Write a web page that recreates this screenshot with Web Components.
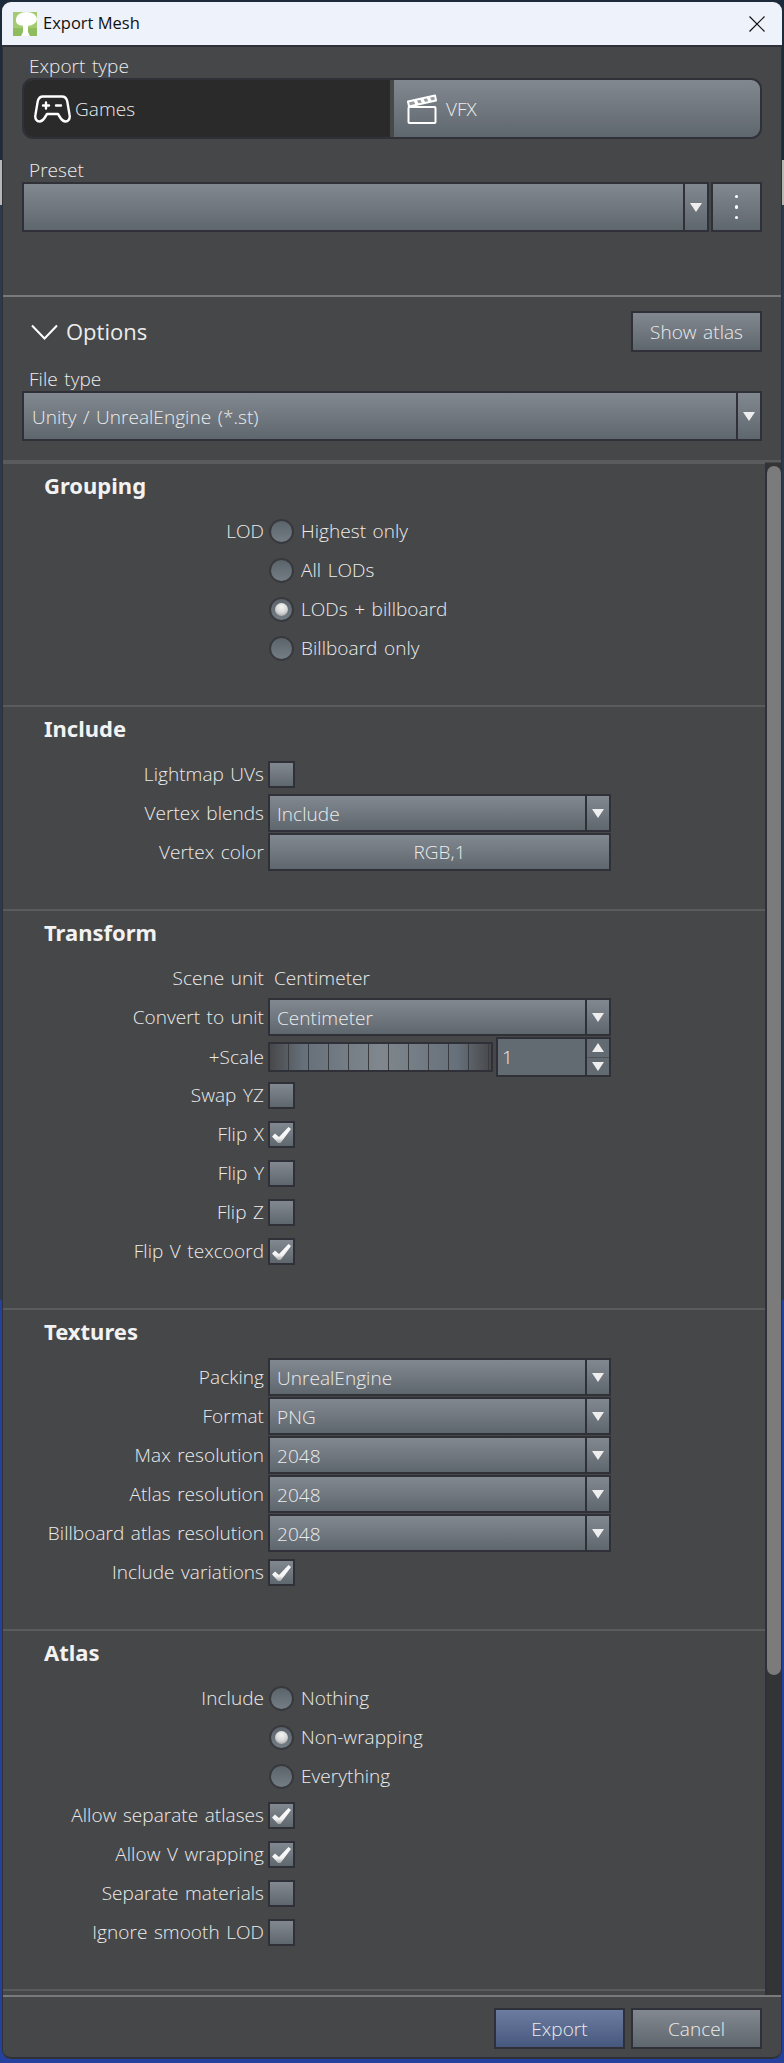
<!DOCTYPE html>
<html lang="en">
<head>
<meta charset="utf-8">
<title>Export Mesh</title>
<style>
  html, body { margin: 0; padding: 0; }
  body {
    width: 784px; height: 2063px; overflow: hidden;
    background: linear-gradient(#1d2a3a 0, #1d2a3a 160px, #b9b9b4 160px, #b9b9b4 205px, #2b3a4e 205px, #2b3a4e 1300px, #25419e 1300px);
    font-family: "Open Sans", "Liberation Sans", sans-serif;
    font-weight: 300;
    font-size: 19px;
    word-spacing: 1.5px;
    letter-spacing: .05px;
    color: #ececec;
  }
</style>
</head>
<body>

<mesh-window>
  <title-bar slot="title">Export Mesh</title-bar>

  <top-panel slot="top">
    <field-label>Export type</field-label>
    <seg-switch></seg-switch>
    <field-label style="margin-top:21px">Preset</field-label>
    <div style="display:flex;gap:2px">
      <combo-box style="flex:1" tall></combo-box>
      <ui-button tall style="width:51px"><dots-icon></dots-icon></ui-button>
    </div>
  </top-panel>

  <top-panel slot="options" options>
    <options-head></options-head>
    <field-label style="margin-top:17px">File type</field-label>
    <combo-box tall pad="10">Unity / UnrealEngine (*.st)</combo-box>
  </top-panel>

  <form-section heading="Grouping">
    <form-row label="LOD"><radio-opt>Highest only</radio-opt></form-row>
    <form-row><radio-opt>All LODs</radio-opt></form-row>
    <form-row><radio-opt checked>LODs + billboard</radio-opt></form-row>
    <form-row><radio-opt>Billboard only</radio-opt></form-row>
  </form-section>

  <form-section heading="Include">
    <form-row label="Lightmap UVs"><check-box></check-box></form-row>
    <form-row label="Vertex blends"><combo-box>Include</combo-box></form-row>
    <form-row label="Vertex color"><ui-button style="height:38px">RGB,1</ui-button></form-row>
  </form-section>

  <form-section heading="Transform">
    <form-row label="Scene unit"><span style="padding-left:6px">Centimeter</span></form-row>
    <form-row label="Convert to unit"><combo-box>Centimeter</combo-box></form-row>
    <form-row label="+Scale"><scale-spin value="1"></scale-spin></form-row>
    <form-row label="Swap YZ"><check-box></check-box></form-row>
    <form-row label="Flip X"><check-box checked></check-box></form-row>
    <form-row label="Flip Y"><check-box></check-box></form-row>
    <form-row label="Flip Z"><check-box></check-box></form-row>
    <form-row label="Flip V texcoord"><check-box checked></check-box></form-row>
  </form-section>

  <form-section heading="Textures">
    <form-row label="Packing"><combo-box>UnrealEngine</combo-box></form-row>
    <form-row label="Format"><combo-box>PNG</combo-box></form-row>
    <form-row label="Max resolution"><combo-box>2048</combo-box></form-row>
    <form-row label="Atlas resolution"><combo-box>2048</combo-box></form-row>
    <form-row label="Billboard atlas resolution"><combo-box>2048</combo-box></form-row>
    <form-row label="Include variations"><check-box checked></check-box></form-row>
  </form-section>

  <form-section heading="Atlas">
    <form-row label="Include"><radio-opt>Nothing</radio-opt></form-row>
    <form-row><radio-opt checked>Non-wrapping</radio-opt></form-row>
    <form-row><radio-opt>Everything</radio-opt></form-row>
    <form-row label="Allow separate atlases"><check-box checked></check-box></form-row>
    <form-row label="Allow V wrapping"><check-box checked></check-box></form-row>
    <form-row label="Separate materials"><check-box></check-box></form-row>
    <form-row label="Ignore smooth LOD"><check-box></check-box></form-row>
  </form-section>
  <form-section></form-section>

  <ui-button slot="footer" primary style="width:131px;height:41px">Export</ui-button>
  <ui-button slot="footer" style="width:131px;height:41px">Cancel</ui-button>
</mesh-window>

<script>
// SHARED LOOK OF THE RAISED GREY CONTROLS
const FACE = 'linear-gradient(#82888f, #5f676e)';
const EDGE = '#2f3038';

function define(name, html, setup) {
    customElements.define(name, class extends HTMLElement {
        constructor() {
            super();
            this.attachShadow({ mode: 'open' });
            this.shadowRoot.innerHTML = html;
        }
        connectedCallback() {
            if (setup) setup(this, this.shadowRoot);
        }
    });
}

// MAIN WINDOW FRAME
define('mesh-window', `
    <style>
        :host { display: flex; flex-direction: column; position: absolute; left: 2px; top: 2px; width: 780px; height: 2057px;
                border-radius: 9px; overflow: hidden; background: #464749; }
        .inner { flex: 1; display: flex; flex-direction: column; min-height: 0; border-left: 1px solid ${EDGE}; border-right: 1px solid ${EDGE}; border-bottom: 2px solid ${EDGE}; border-radius: 0 0 9px 9px; }
        .scroll { height: 1533px; display: flex; }
        .content { width: 762px; overflow: hidden; }
        .bar { background: #333436; border-left: 2px solid ${EDGE}; box-sizing: content-box; width: 14px; padding-top: 3px; margin-top: 1px; }
        .thumb { height: 1209px; background: #7b7b7b; border-radius: 7px; }
        .line { height: 2px; background: #7a7a7a; }
        .foot { flex: 1; display: flex; justify-content: flex-end; gap: 6px; padding: 11px 19px 0 0; }
    </style>
    <slot name="title"></slot>
    <div class="inner">
        <slot name="top"></slot>
        <div class="line"></div>
        <slot name="options"></slot>
        <div class="scroll">
            <div class="content"><slot></slot></div>
            <div class="bar"><div class="thumb"></div></div>
        </div>
        <div class="line"></div>
        <div class="foot"><slot name="footer"></slot></div>
    </div>
`);

// LIGHT CAPTION BAR WITH APP ICON AND CLOSE CROSS
define('title-bar', `
    <style>
        :host { display: flex; align-items: center; height: 43px; flex: none; background: #eef2fb; color: #111; border-bottom: 2px solid ${EDGE};
                font: 400 16.5px "Open Sans", "Liberation Sans", sans-serif; word-spacing: 0; letter-spacing: 0; }
        svg.app { margin: 0 6px 0 11px; }
        .txt { flex: 1; position: relative; top: -1px; }
        svg.x { margin-right: 17px; }
    </style>
    <svg class="app" width="24" height="24" viewBox="0 0 24 24">
        <rect width="24" height="24" fill="#a3cb72"/>
        <rect y="16" width="24" height="8" fill="#8fbc5c"/>
        <ellipse cx="13.500" cy="7" rx="10.500" ry="7" fill="#fff"/>
        <ellipse cx="9" cy="9" rx="6" ry="4.500" fill="#fff"/>
        <polygon points="10,12 15,12 15,20 17,24 8,24 10,20" fill="#fff"/>
    </svg>
    <span class="txt"><slot></slot></span>
    <svg class="x" width="16" height="16" viewBox="0 0 16 16"><path d="M.5.5 15.5 15.5M15.5.5.5 15.5" stroke="#111" stroke-width="1.2" fill="none"/></svg>
`);

// UPPER FIXED PANELS
define('top-panel', `
    <style>
        :host { display: flex; flex-direction: column; flex: none; padding: 9px 19px 0 19px; height: 248px; box-sizing: border-box; }
        :host([options]) { height: 165px; padding-top: 14px; border-bottom: 2px solid #5a5b5d; }
    </style>
    <slot></slot>
`);

// SMALL CAPTION ABOVE A CONTROL
define('field-label', `
    <style>
        :host { display: block; height: 22px; line-height: 20px; padding-left: 7px; }
    </style>
    <slot></slot>
`);

// GAMES / VFX TOGGLE
define('seg-switch', `
    <style>
        :host { display: flex; height: 61px; box-sizing: border-box; border: 2px solid ${EDGE}; border-radius: 11px; overflow: hidden; background: #47484a; }
        .seg { display: flex; align-items: center; }
        .on { width: 366px; background: #2a2a2a; padding-left: 10px; box-sizing: border-box; gap: 4px; }
        .off { flex: 1; margin-left: 4px; background: ${FACE}; padding-left: 13px; gap: 9px; }
    </style>
    <div class="seg on">
        <svg width="37" height="28" viewBox="0 0 37 28" fill="none" stroke="#fff" stroke-width="2.4" stroke-linejoin="round" stroke-linecap="round">
            <path d="M9 1.5H28C31 1.5 32.5 3.5 33.2 6L35.6 20C36.4 24 34 26.5 31.5 26.5 29 26.5 27.8 25 26.5 23L24 19H13L10.5 23C9.2 25 8 26.5 5.5 26.5 3 26.5.6 24 1.4 20L3.8 6C4.5 3.5 6 1.5 9 1.5Z"/>
            <path d="M9 10.500H15M12 7.500V13.500M22 10.500H27"/>
        </svg>
        <span>Games</span>
    </div>
    <div class="seg off">
        <svg width="30" height="30" viewBox="0 0 30 30" fill="none" stroke="#fff" stroke-width="2" stroke-linejoin="round">
            <rect x="1.500" y="13" width="27" height="16" rx="1"/>
            <path d="M1 7.500 28 1.500 29 6.500 2 12.500Z" fill="#fff" fill-opacity=".25"/>
            <path d="M8 6 10.500 11M14.500 4.500 17 9.500M21 3 23.500 8" stroke-width="3.2"/>
        </svg>
        <span>VFX</span>
    </div>
`);

// DROPDOWN WITH A SEPARATE ARROW CELL
define('combo-box', `
    <style>
        :host { display: flex; height: 38px; box-sizing: border-box; border: 2px solid ${EDGE}; background: ${FACE}; align-items: stretch; }
        :host([tall]) { height: 50px; }
        .val { flex: 1; display: flex; align-items: center; padding: 2px 0 0 7px; border-right: 2px solid ${EDGE}; }
        :host([pad]) .val { padding: 2px 0 0 8px; }
        .arrow { width: 22px; display: flex; align-items: center; justify-content: center; }
        i { width: 0; height: 0; border: 6.500px solid transparent; border-top: 9px solid #eee; border-bottom: 0; }
    </style>
    <div class="val"><slot></slot></div>
    <div class="arrow"><i></i></div>
`);

// PLAIN BUTTON
define('ui-button', `
    <style>
        :host { display: flex; align-items: center; justify-content: center; box-sizing: border-box; border: 2px solid ${EDGE}; background: ${FACE}; }
        :host([tall]) { height: 50px; }
        :host([primary]) { background: linear-gradient(#6c7ca1, #47587e); }
    </style>
    <slot></slot>
`);

// THREE VERTICAL DOTS
define('dots-icon', `
    <style>
        :host { display: flex; flex-direction: column; gap: 7px; }
        b { width: 3.500px; height: 3.500px; border-radius: 50%; background: #fff; }
    </style>
    <b></b><b></b><b></b>
`);

// COLLAPSIBLE HEADER WITH SHOW ATLAS
define('options-head', `
    <style>
        :host { display: flex; align-items: center; height: 41px; }
        svg { margin: 0 8px 0 9px; }
        .t { flex: 1; font-size: 22px; font-weight: 400; letter-spacing: 0; position: relative; top: -1px; }
    </style>
    <svg width="27" height="16" viewBox="0 0 27 16"><path d="M1 1.500 13.500 14.500 26 1.500" fill="none" stroke="#fff" stroke-width="2"/></svg>
    <span class="t">Options</span>
    <ui-button style="width:131px;height:41px">Show atlas</ui-button>
`);

// ONE SCROLLING GROUP OF ROWS
define('form-section', `
    <style>
        :host { display: block; border-top: 2px solid #5a5b5d; padding-bottom: 37px; }
        h3 { margin: 0; height: 48px; padding-left: 41px; font: 700 22px/42px "Noto Sans", "Liberation Sans", sans-serif; letter-spacing: 0; word-spacing: 0; color: #f2f2f2; box-sizing: border-box; }
    </style>
    <h3></h3>
    <slot></slot>
`, (el, root) => {
    root.querySelector('h3').textContent = el.getAttribute('heading') || '';
});

// LABEL ON THE LEFT, CONTROL ON THE RIGHT
define('form-row', `
    <style>
        :host { display: grid; grid-template-columns: 261px 343px; column-gap: 4px; height: 38px; margin-bottom: 1px; align-items: center; }
        .lab { text-align: right; white-space: nowrap; }
    </style>
    <div class="lab"></div>
    <div class="ctl"><slot></slot></div>
`, (el, root) => {
    root.querySelector('.lab').textContent = el.getAttribute('label') || '';
});

// RADIO BUTTON WITH CAPTION
define('radio-opt', `
    <style>
        :host { display: flex; align-items: center; gap: 7px; padding-left: 1px; }
        .r { width: 25px; height: 25px; box-sizing: border-box; border-radius: 50%; border: 2px solid #38393e; background: linear-gradient(#5b636b, #747c84); display: flex; align-items: center; justify-content: center; }
        .d { display: none; width: 13px; height: 13px; border-radius: 50%; background: radial-gradient(circle at 50% 30%, #f4f4f4, #d8d8d8 50%, #8e8e8e); }
        :host([checked]) .d { display: block; }
    </style>
    <div class="r"><div class="d"></div></div>
    <span><slot></slot></span>
`);

// SQUARE CHECKBOX
define('check-box', `
    <style>
        :host { display: block; width: 27px; height: 27px; box-sizing: border-box; border: 2px solid ${EDGE}; background: ${FACE}; }
        svg { display: none; }
        :host([checked]) svg { display: block; }
    </style>
    <svg width="23" height="23" viewBox="0 0 23 23">
        <defs><linearGradient id="c" x1="0" y1="0" x2="0" y2="1"><stop offset="0" stop-color="#fff"/><stop offset=".7" stop-color="#f2f2f2"/><stop offset="1" stop-color="#a8a8a8"/></linearGradient></defs>
        <path d="M2,13.500 L5,10.500 L9,14 L18.500,4 L21,6 L10.500,20 L8,20 Z" fill="url(#c)"/>
    </svg>
`);

// TICKED SLIDER AND NUMBER SPINNER
define('scale-spin', `
    <style>
        :host { display: flex; align-items: center; gap: 3px; }
        .slide { width: 225px; height: 30px; box-sizing: border-box; border: 2px solid ${EDGE};
                 background: repeating-linear-gradient(90deg, transparent 0, transparent 18px, #3a3b3e 18px, #3a3b3e 19px, transparent 19px, transparent 20px) 0 0,
                             linear-gradient(90deg, #47484a, #66707a 15%, #80878e 50%, #66707a 85%, #47484a); }
        .spin { width: 115px; height: 40px; box-sizing: border-box; border: 2px solid ${EDGE}; background: #626a72; display: flex; }
        .num { flex: 1; padding-left: 4px; line-height: 36px; border-right: 2px solid ${EDGE}; }
        .btns { width: 22px; display: flex; flex-direction: column; }
        .btns div { flex: 1; display: flex; align-items: center; justify-content: center; }
        .up { border-bottom: 1px solid #4e5359; }
        i { width: 0; height: 0; border: 6.500px solid transparent; }
        .up i { border-bottom: 9px solid #eee; border-top: 0; }
        .dn i { border-top: 9px solid #eee; border-bottom: 0; }
    </style>
    <div class="slide"></div>
    <div class="spin">
        <div class="num"></div>
        <div class="btns"><div class="up"><i></i></div><div class="dn"><i></i></div></div>
    </div>
`, (el, root) => {
    root.querySelector('.num').textContent = el.getAttribute('value');
});
</script>
</body>
</html>
